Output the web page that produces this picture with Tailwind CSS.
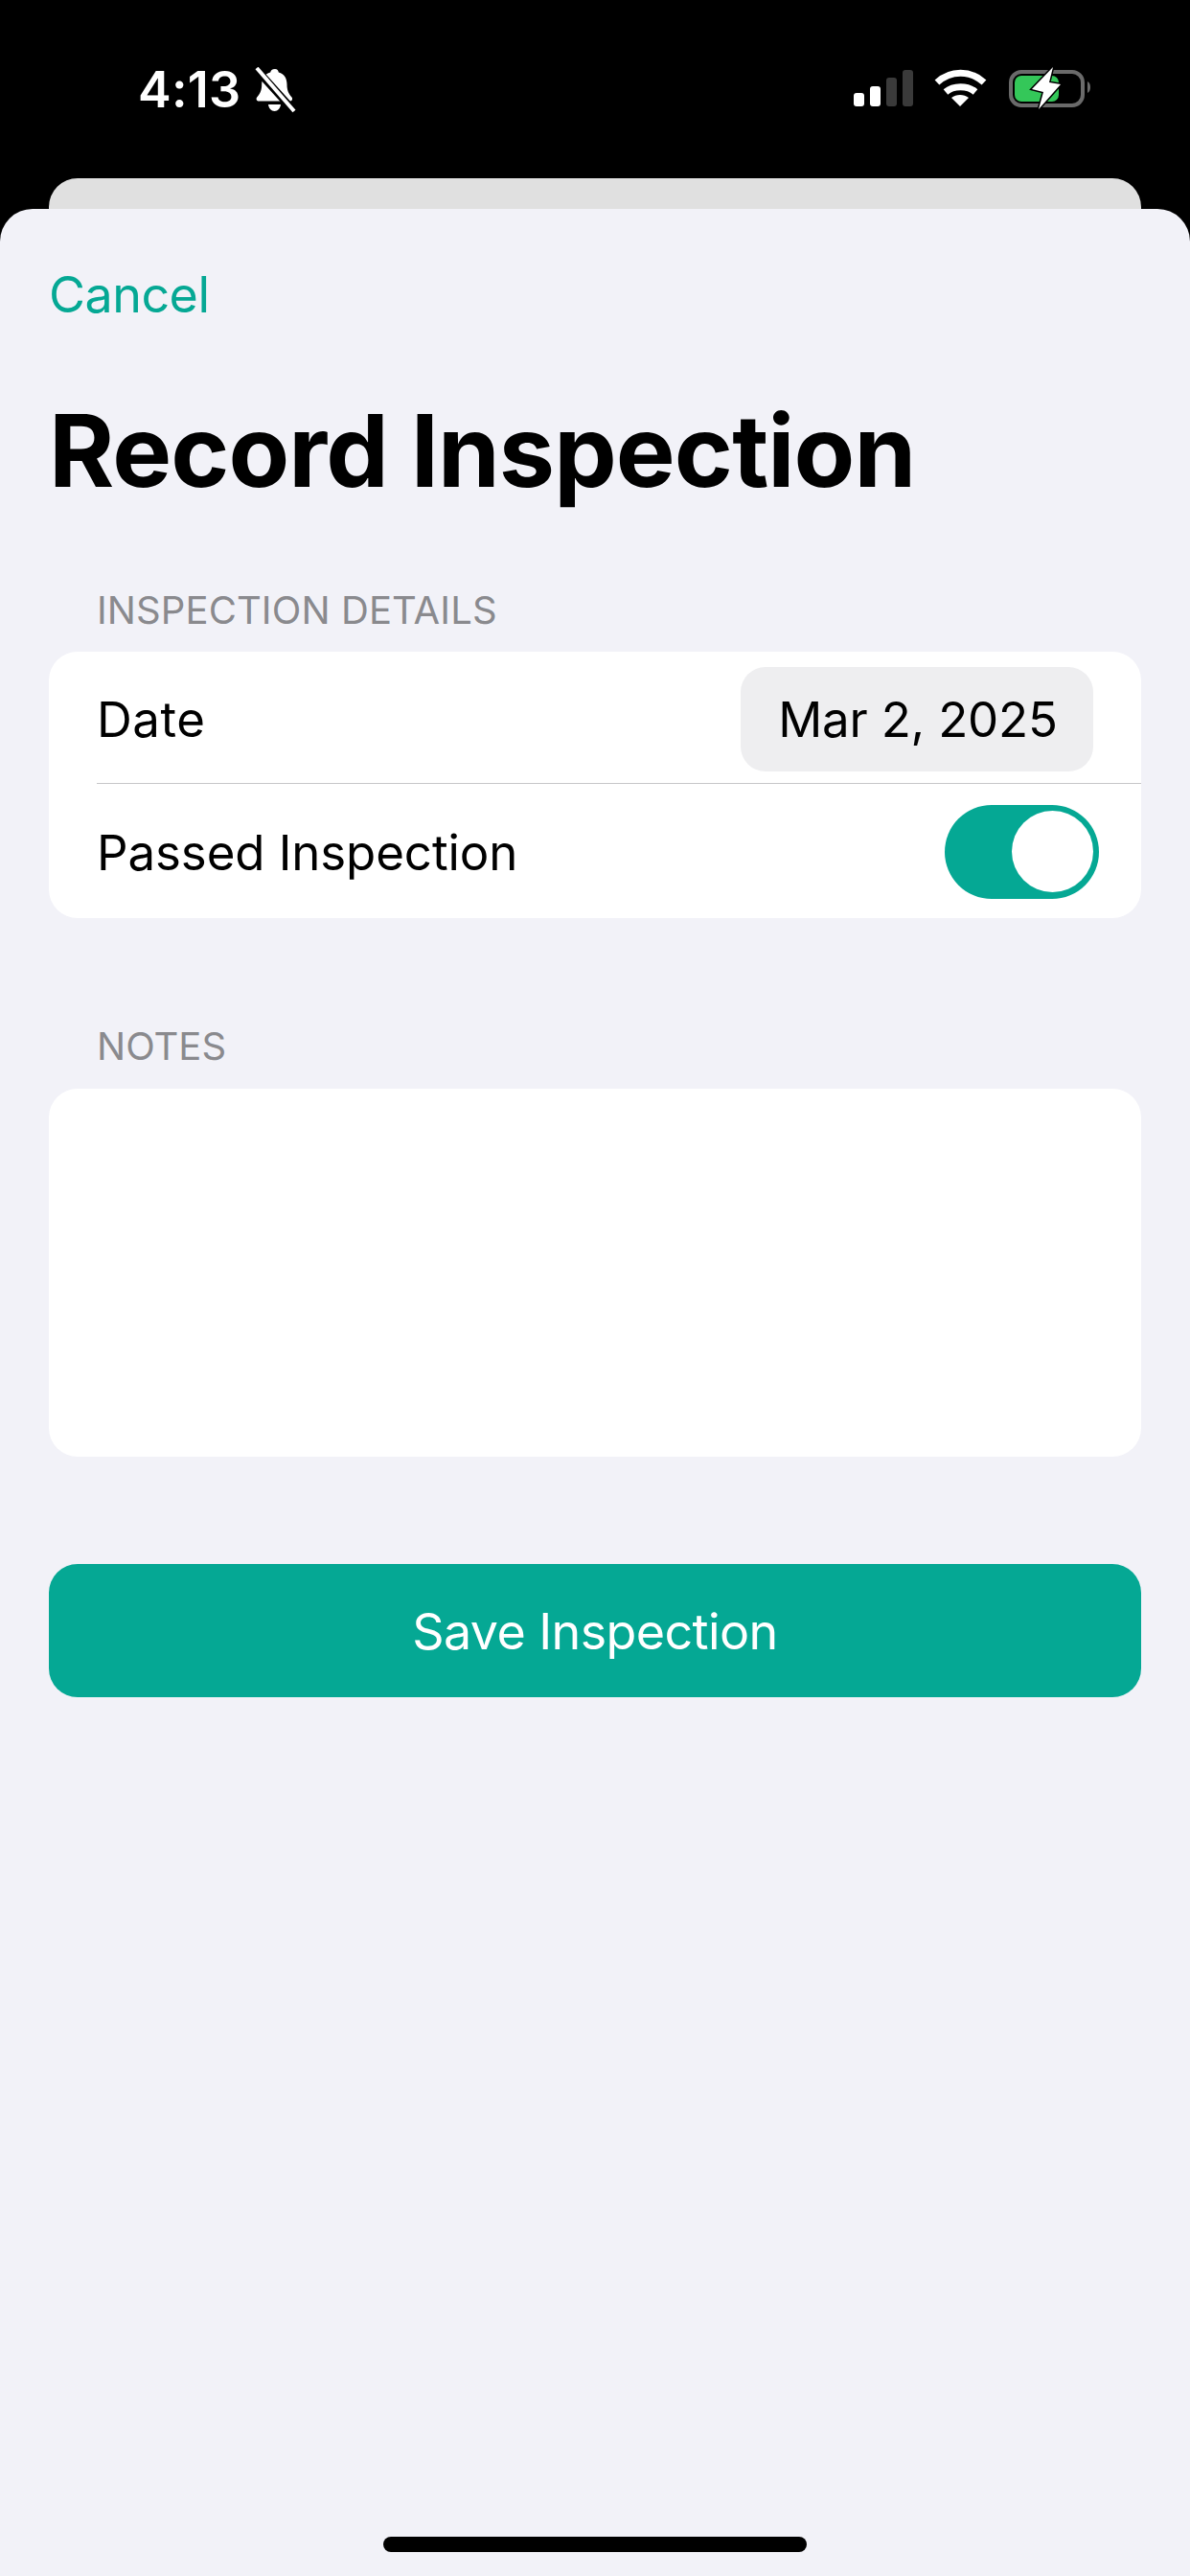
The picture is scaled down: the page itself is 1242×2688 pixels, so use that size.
<!DOCTYPE html>
<html lang="en">
<head>
<meta charset="UTF-8">
<meta name="viewport" content="width=device-width, initial-scale=1.0">
<title>Record Inspection</title>
<script src="https://cdn.jsdelivr.net/npm/@tailwindcss/browser@4"></script>
</head>
<body class="bg-black w-[1242px] h-[2688px] overflow-hidden font-['Inter',sans-serif] flex flex-col">

  <!-- Status bar -->
  <div class="h-[186px] shrink-0 flex items-start justify-between pl-[144px] pr-[102px] pt-[68px] text-white">
    <div class="flex items-center gap-[14px] h-[52px]">
      <span class="text-[52px] leading-[52px] font-semibold tracking-[0.25px]">4:13</span>
      <svg class="w-[44px] h-[48px]" viewBox="0 0 44 48" fill="none">
        <path d="M22 2c2.500 0 3.500 1.800 3.800 3.500 6 1.500 8.700 6.500 8.700 12.500 0 6 1.500 9.500 5 13.500 1.200 1.500.5 4-1.800 4H5c-2.300 0-3-2.500-1.800-4 3.500-4 5-7.500 5-13.500 0-6 3-11 9-12.500C17.500 3.800 19 2 22 2z" fill="#fff"/>
        <path d="M15 39h13c-.5 4-3 7-6.500 7S15.500 43 15 39z" fill="#fff"/>
        <path d="M4 4l38 42" stroke="#000" stroke-width="8"/>
        <path d="M3 1l39 45" stroke="#fff" stroke-width="4"/>
      </svg>
    </div>
    <svg class="w-[250px] h-[48px]" viewBox="0 0 250 48" fill="none">
      <rect x="1" y="29" width="11" height="14" rx="3" fill="#fff"/>
      <rect x="18" y="22" width="11" height="21" rx="3" fill="#fff"/>
      <rect x="35" y="13" width="11" height="30" rx="3" fill="#3a3a3a"/>
      <rect x="52" y="5" width="11" height="38" rx="3" fill="#3a3a3a"/>
      <path d="M88 18c14-13 35-13 49 0" stroke="#fff" stroke-width="7"/>
      <path d="M97 28c8-7 23-7 31 0" stroke="#fff" stroke-width="7"/>
      <path d="M103 34c5-4 13-4 18 0l-9 9z" fill="#fff"/>
      <rect x="165" y="7" width="75" height="35" rx="11" stroke="#6a6a6a" stroke-width="4"/>
      <rect x="169" y="11" width="46" height="27" rx="7" fill="#34c759"/>
      <path d="M245 17c2 1 3 3 3 6s-1 5-3 6z" fill="#6a6a6a"/>
      <path d="M209 2L187 25l12 3-5 18 23-26-12-2z" fill="#fff" stroke="#000" stroke-width="3" paint-order="stroke"/>
    </svg>
  </div>

  <!-- Card peeking out behind the sheet -->
  <div class="h-[32px] shrink-0 mx-[51px] bg-[#e0e0e0] rounded-t-[30px]"></div>

  <!-- Sheet -->
  <div class="flex-1 bg-[#f2f2f8] rounded-t-[34px] px-[51px] flex flex-col">
    <div class="text-[52px] leading-[62px] text-[#05a894] pt-[59px] tracking-[-0.5px]">Cancel</div>

    <h1 class="text-[104px] leading-[124px] font-bold text-black mt-[69px] tracking-[-0.900px]">Record Inspection</h1>

    <div class="text-[40px] leading-[48px] text-[#8a8a8e] pl-[50px] mt-[81px] tracking-[0.1px]">INSPECTION DETAILS</div>
    <div class="bg-white rounded-[30px] mt-[19px] pl-[50px]">
      <div class="h-[138px] flex items-center justify-between pr-[50px] border-b-[1.500px] border-[#c6c6c8]">
        <span class="text-[51px] tracking-[0.5px] text-black pt-[5px]">Date</span>
        <span class="w-[368px] h-[109px] mt-[3px] flex items-center justify-center bg-[#eeeef0] rounded-[26px] text-[51px] tracking-[-0.2px] text-black pl-[2px] pt-[2px]">Mar 2, 2025</span>
      </div>
      <div class="h-[140px] flex items-center justify-between pr-[44px]">
        <span class="text-[51px] tracking-[-0.1px] text-black pt-[4px]">Passed Inspection</span>
        <span class="w-[161px] h-[98px] mt-[1px] rounded-full bg-[#05a894] flex items-center justify-end pr-[6px]">
          <span class="w-[85px] h-[85px] rounded-full bg-white"></span>
        </span>
      </div>
    </div>

    <div class="text-[40px] leading-[48px] text-[#8a8a8e] pl-[50px] mt-[110px]">NOTES</div>
    <div class="bg-white rounded-[30px] mt-[20px] h-[384px]"></div>

    <button class="mt-[112px] h-[139px] rounded-[30px] bg-[#05a894] text-white text-[52px] tracking-[-0.6px] pt-[2px]">Save Inspection</button>

    <div class="mt-[876px] self-center w-[442px] h-[16px] rounded-full bg-black"></div>
  </div>
</body>
</html>
